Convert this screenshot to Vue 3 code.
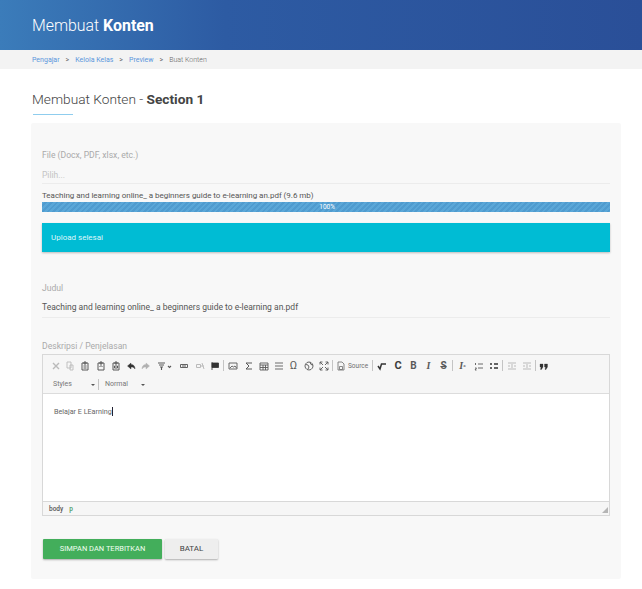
<script setup>
const row = [
  { w: 15, o: .3, d: 'M2 2l6 6M8 2L2 8', s: 1.4 },
  { w: 14, o: .3, d: 'M2 1h4v6H2zM5 4h3v5H5z', s: .9 },
  { w: 16, o: .8, d: 'M2 2h6v7H2zM4 1h2v2H4zM3.500 5h3M3.500 7h3', s: 1 },
  { w: 15, o: .8, d: 'M2 2h6v7H2zM4 1h2v2H4zM3.500 6l1.500-1.500L6.500 6', s: 1 },
  { w: 15, o: .8, d: 'M2 2h6v7H2zM4 1h2v2H4zM3.500 5h3v2h-3z', s: 1 },
  { w: 15, o: 1, d: 'M5 2L1.500 5 5 8V6c2 0 3 .6 4 2 0-3-1.500-4.500-4-4.500z', s: .4, f: true },
  { w: 15, o: .35, d: 'M5 2l3.500 3L5 8V6c-2 0-3 .6-4 2 0-3 1.500-4.500 4-4.500z', s: .4, f: true },
  { w: 23, o: .8, d: 'M1 2h7M2 4h5M3 6h3M4.500 6v3M11 5l1.500 1.500L14 5', s: 1.100, vw: 15 },
  { w: 16, o: .75, d: 'M1.500 3.500h7v3h-7zM3 5h4', s: 1 },
  { w: 15, o: .3, d: 'M1.500 3.500h4v3h-4zM6 5h3M7 2l2 6', s: 1 },
  { w: 15, o: 1, d: 'M2 1v8M2 2h6.500v4.500H2z', s: .8, f: true },
  { sep: true },
  { w: 16, o: .8, d: 'M1 2h8v6H1zM2 7l2-2 1.500 1L7 5l1.500 2', s: .9 },
  { w: 15, o: .8, d: 'M8 2H2l3 3-3 3h6', s: 1 },
  { w: 15, o: .8, d: 'M1 2h8v7H1zM1 4h8M4 4v5M6.500 4v5M1 6.500h8', s: .9 },
  { w: 15, o: .7, d: 'M1 2h8M1 5h8M1 8h8', s: 1 },
  { t: 'Ω', w: 15, o: .8, cls: 'sym' },
  { w: 15, o: .8, d: 'M5 1a4 4 0 1 0 .01 0zM2 3.500l2 .5 1 2-1 2M6 1.500l1 2 2 .5', s: .9 },
  { w: 15, o: .8, d: 'M1 1l3 3M1 3.500V1h2.500M9 1L6 4M9 3.500V1H6.500M1 9l3-3M1 6.500V9h2.500M9 9L6 6M9 6.500V9H6.500', s: .9 },
  { sep: true },
  { w: 14, o: .7, d: 'M2 1h4l2 2v6H2zM3.500 5.500h3v3h-3z', s: .8 },
  { t: 'Source', w: 23, o: .7, cls: 'src' },
  { sep: true },
  { w: 16, o: 1, d: 'M1 5l2 3 1.500-5H9', s: 1.500 },
  { t: 'C', w: 16, o: .95, cls: 'boldc' },
  { t: 'B', w: 15, o: .8, cls: 'b' },
  { t: 'I', w: 15, o: .8, cls: 'i' },
  { t: 'S', w: 15, o: .8, cls: 's' },
  { sep: true },
  { t: 'I', sub: 'x', w: 17, o: .8, cls: 'i' },
  { w: 15, o: .8, d: 'M4 3h5M4 7h5M1.500 2v2M1 7h1.500L1 9h1.500', s: .9 },
  { w: 15, o: 1, d: 'M1 3h2M1 7h2M5 3h4M5 7h4', s: 1.400 },
  { sep: true },
  { w: 15, o: .3, d: 'M1 2h8M1 8h8M5 3v4M1 5h2M7 5h2', s: 1 },
  { w: 15, o: .3, d: 'M1 2h8M1 8h8M5 3v4M1 5h2M7 5h2', s: 1 },
  { sep: true },
  { w: 13, o: 1, d: 'M1 3h3v3L2.500 8.500H1.500L2 6H1zM5.500 3h3v3L7 8.500H6L6.500 6h-1z', s: .3, f: true },
]
</script>

<template>
  <div class="page">
    <header class="top"><h1>Membuat <b>Konten</b></h1></header>
    <nav class="crumbs">
      <a>Pengajar</a><i>&gt;</i><a>Kelola Kelas</a><i>&gt;</i><a>Preview</a><i>&gt;</i><span>Buat Konten</span>
    </nav>
    <main class="main">
      <h2>Membuat Konten - <b>Section 1</b></h2>
      <div class="rule"></div>
      <section class="card">
        <label class="lab first">File (Docx, PDF, xlsx, etc.)</label>
        <div class="input ph">Pilih...</div>
        <div class="fname">Teaching and learning online_ a beginners guide to e-learning an.pdf (9.6 mb)</div>
        <div class="bar">100%</div>
        <div class="alert">Upload selesai</div>
        <label class="lab judul">Judul</label>
        <div class="input val">Teaching and learning online_ a beginners guide to e-learning an.pdf</div>
        <label class="lab desk">Deskripsi / Penjelasan</label>
        <div class="editor">
          <div class="toolbar">
            <div class="tbrow">
              <template v-for="(it, n) in row" :key="n">
                <span v-if="it.sep" class="sep"></span>
                <span v-else-if="it.t" class="btn" :class="it.cls" :style="{ width: it.w + 'px', opacity: it.o }">{{ it.t }}<sub v-if="it.sub">{{ it.sub }}</sub></span>
                <span v-else class="btn" :style="{ width: it.w + 'px', opacity: it.o }">
                  <svg :width="it.vw || 10" height="10" :viewBox="`0 0 ${it.vw || 10} 10`">
                    <path :d="it.d" :fill="it.f ? '#333' : 'none'" stroke="#333" :stroke-width="it.s" />
                  </svg>
                </span>
              </template>
            </div>
            <div class="tbrow second">
              <span class="combo c1">Styles<em></em></span>
              <span class="sep"></span>
              <span class="combo c2">Normal<em></em></span>
            </div>
          </div>
          <div class="content">Belajar E LEarning<span class="caret"></span></div>
          <div class="foot">
            <span><b>body</b><b class="p">p</b></span>
            <svg width="6" height="6" viewBox="0 0 6 6"><path d="M6 0v6H0z" fill="#b5b5b5" /></svg>
          </div>
        </div>
        <div class="actions">
          <button class="primary">SIMPAN DAN TERBITKAN</button>
          <button class="cancel">BATAL</button>
        </div>
      </section>
    </main>
  </div>
</template>

<style scoped>
.page { width: 642px; height: 589px; overflow: hidden; background: #fff; font-family: Roboto, "Liberation Sans", sans-serif; color: #444; }
.top { height: 50px; box-sizing: border-box; padding-left: 32px; display: flex; align-items: center; background: linear-gradient(90deg, #3b7cba 0%, #2d5ba3 35%, #2a4f98 100%); }
.top h1 { margin: 0; font-size: 15.900px; font-weight: 300; color: #fff; }
.top b { font-weight: 700; }
.crumbs { height: 19px; box-sizing: border-box; padding-left: 32px; display: flex; align-items: center; background: #f3f3f3; font-size: 7px; color: #666; }
.crumbs a { color: #5a96dc; }
.crumbs i { font-style: normal; margin: 0 6px; }
.crumbs span { font-weight: 300; }
.main { padding: 0 21px 0 31px; }
h2 { margin: 0; padding: 22px 0 0 1px; font-size: 13.700px; line-height: 17px; font-weight: 300; color: #444; }
h2 b { font-weight: 700; }
.rule { width: 40px; height: 1px; margin: 6px 0 0 2px; background: #8fcdee; }
.card { margin-top: 8px; height: 456px; box-sizing: border-box; padding: 27px 11px 0; background: #f8f8f8; border-radius: 2px; }
.lab { display: block; font-size: 8.600px; line-height: 10px; color: #aaa; }
.input { font-size: 8.500px; line-height: 12px; border-bottom: 1px solid #ececec; }
.ph { padding: 9px 0 2px; color: #c4c4c4; }
.fname { margin-top: 7px; font-size: 8px; letter-spacing: -.02px; line-height: 9px; color: #555; }
.bar { height: 10px; margin-top: 2px; padding-right: 275px; box-sizing: border-box; text-align: right; color: #fff; font-size: 6.500px; line-height: 10px; background: repeating-linear-gradient(135deg, #5aa7d8 0 2px, #4f9bcf 2px 4px); }
.alert { height: 29px; margin-top: 11px; padding-left: 9px; line-height: 29px; font-size: 8px; font-weight: 400; color: #dff7fb; background: #00bcd4; box-shadow: 0 1px 2px rgba(0,0,0,.25); }
.judul { margin-top: 31px; }
.val { padding: 8px 0 4px; color: #555; }
.desk { margin-top: 23px; }
.editor { margin-top: 3px; border: 1px solid #d8d8d8; background: #f6f6f6; }
.toolbar { height: 39px; box-sizing: border-box; padding: 5px 0 0 5px; border-bottom: 1px solid #dcdcdc; }
.tbrow { display: flex; align-items: center; height: 11px; }
.second { margin-top: 8px; }
.btn { flex: none; display: flex; align-items: center; justify-content: center; height: 11px; font-size: 10px; color: #333; }
.src { font-size: 6.500px; justify-content: flex-start; }
.sym { font-size: 11px; }
.boldc { font-size: 11px; font-weight: 700; }
.b { font-weight: 700; }
.i { font-style: italic; font-family: "Liberation Serif", serif; font-weight: 700; }
.i sub { font-size: 5px; line-height: 0; }
.s { font-weight: 700; text-decoration: line-through; }
.sep { flex: none; width: 1px; height: 11px; margin: 0 1px; background: #c4c4c4; }
.combo { position: relative; flex: none; font-size: 7px; color: #777; padding-left: 5px; box-sizing: border-box; line-height: 11px; }
.combo em { position: absolute; right: 2px; top: 5px; border: 2px solid transparent; border-top: 2px solid #555; border-bottom: 0; }
.c1 { width: 49px; }
.c2 { width: 47px; }
.content { height: 107px; box-sizing: border-box; padding: 12px 11px 0; background: #fff; font-size: 7.200px; line-height: 11px; color: #666; }
.caret { display: inline-block; width: 1px; height: 9px; vertical-align: -2px; background: #223; }
.foot { height: 14px; box-sizing: border-box; padding: 0 1px 0 6px; display: flex; align-items: center; justify-content: space-between; border-top: 1px solid #d8d8d8; font-size: 6.500px; color: #555; }
.foot b { font-weight: 500; }
.foot .p { margin-left: 6px; color: #4a9a6a; }
.foot svg { margin-top: 3px; }
.actions { display: flex; gap: 3px; margin-top: 23px; }
button { font: 400 8px/20px Roboto, sans-serif; height: 20px; border: 0; padding: 0; border-radius: 1px; box-shadow: 0 1px 2px rgba(0,0,0,.3); }
.primary { width: 119px; margin-left: 1px; font-size: 7.500px; color: #f1fff2; background: #43ae5b; }
.cancel { width: 53px; color: #444; background: #eeeeee; }
</style>

<style>
body { background: #fff; }
</style>
